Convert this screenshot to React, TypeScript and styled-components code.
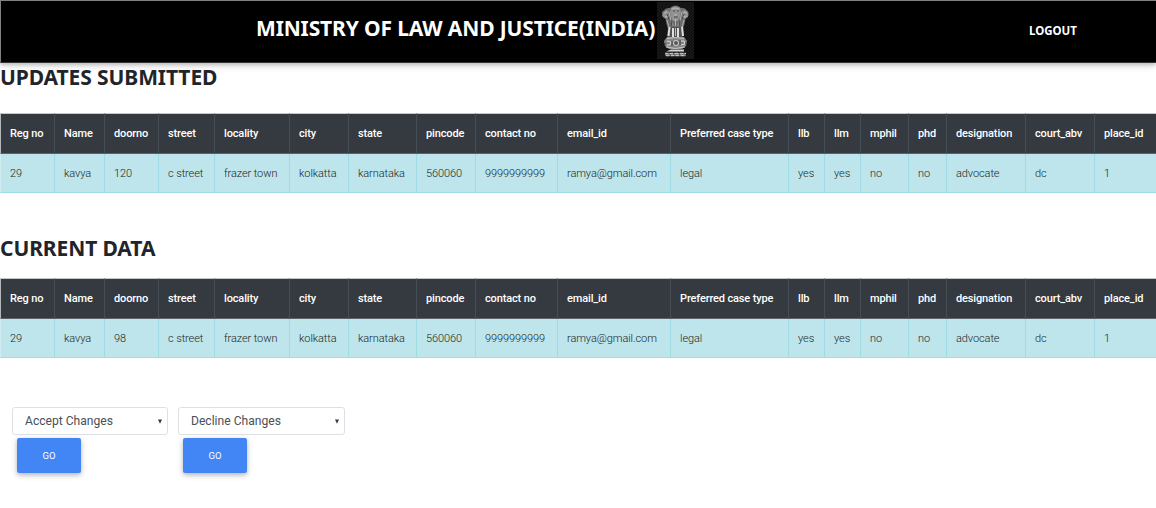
import React from "react";
import styled, { createGlobalStyle } from "styled-components";

const GlobalStyle = createGlobalStyle`
  * { box-sizing: border-box; }
  body {
    margin: 0;
    background: #fff;
    color: #212529;
    font-family: Roboto, "Liberation Sans", sans-serif;
  }
`;

const headingFont = `"Noto Sans", "Open Sans", sans-serif`;

const Navbar = styled.header`
  display: flex;
  align-items: flex-start;
  height: 63px;
  padding-left: 255px;
  background: #000;
  border-top: 1px solid #808080;
  border-left: 1px solid #808080;
  border-bottom: 1px solid #383435;
  box-shadow: 0 2px 4px rgba(0, 0, 0, 0.2), 0 2px 9px rgba(0, 0, 0, 0.12);
`;

const Brand = styled.h1`
  width: 401px;
  margin: 13px 0 0;
  color: #fff;
  font: 700 21px/28px ${headingFont};
  letter-spacing: -0.14px;
  white-space: nowrap;
`;

const Emblem = styled.svg`
  display: block;
  width: 37px;
  height: 57px;
  margin-top: 1px;
`;

const Logout = styled.a`
  margin: 21px 0 0 335px;
  color: #fff;
  font: 700 11.5px/18px ${headingFont};
  letter-spacing: -0.05px;
`;

const Heading = styled.h2<{ $height: number }>`
  height: ${(p) => p.$height}px;
  margin: 0;
  font: 700 21px/28px ${headingFont};
  letter-spacing: -0.1px;
  white-space: nowrap;
`;

const Table = styled.table`
  width: 1156px;
  table-layout: fixed;
  border-collapse: separate;
  border-spacing: 0;
  font-size: 11px;
  line-height: 16px;
  text-align: left;
  white-space: nowrap;
`;

const HeadCell = styled.th`
  height: 41px;
  padding: 1px 0 0 9px;
  background: #343a40;
  color: #fff;
  font-weight: 500;
  letter-spacing: -0.14px;
  border-top: 1px solid #c5c8ca;
  border-left: 1px solid #454d55;
  border-bottom: 1px solid #5c646b;
  &:first-child { border-left-color: #b5b8ba; }
`;

const DataCell = styled.td`
  height: 39px;
  padding: 2px 0 0 9px;
  background: #bee5eb;
  color: #212529;
  font-weight: 300;
  letter-spacing: -0.09px;
  border-left: 1px solid #9fdbe4;
  border-bottom: 1px solid #9fdbe4;
  &:first-child { border-left-color: #d2ecf0; }
`;

const Section = styled.section<{ $top: number }>`
  padding-top: ${(p) => p.$top}px;
`;

const Actions = styled.div`
  display: flex;
  gap: 10px;
  padding: 49px 0 30px 12px;
`;

const Action = styled.form`
  display: flex;
  flex-direction: column;
  align-items: flex-start;
`;

const Picker = styled.div<{ $width: number }>`
  display: flex;
  align-items: center;
  justify-content: space-between;
  width: ${(p) => p.$width}px;
  height: 28px;
  padding: 0 5px 0 12px;
  border: 1px solid #dde1e5;
  border-radius: 3px;
  color: #495057;
  font-size: 12.1px;
`;

const Arrow = styled.svg`
  width: 4px;
  height: 5px;
`;

const GoButton = styled.button`
  width: 64.5px;
  height: 35px;
  margin: 3px 0 0 4.7px;
  padding: 0;
  border: 0;
  border-radius: 2px;
  background: #4285f4;
  color: #fff;
  font: 400 9.5px Roboto, sans-serif;
  box-shadow: 0 2px 4px rgba(0, 0, 0, 0.18), 0 2px 7px rgba(0, 0, 0, 0.14);
`;

const columns: [string, number][] = [
  ["Reg no", 54], ["Name", 50], ["doorno", 54], ["street", 56], ["locality", 75],
  ["city", 59], ["state", 68], ["pincode", 59], ["contact no", 82], ["email_id", 113],
  ["Preferred case type", 118], ["llb", 36], ["llm", 36], ["mphil", 48], ["phd", 38],
  ["designation", 79], ["court_abv", 69], ["place_id", 62],
];

const record = (door: string) => [
  "29", "kavya", door, "c street", "frazer town", "kolkatta", "karnataka", "560060",
  "9999999999", "ramya@gmail.com", "legal", "yes", "yes", "no", "no", "advocate", "dc", "1",
];

function RecordTable({ values }: { values: string[] }) {
  return (
    <Table>
      <colgroup>
        {columns.map(([name, width]) => <col key={name} width={width} />)}
      </colgroup>
      <thead>
        <tr>{columns.map(([name]) => <HeadCell key={name}>{name}</HeadCell>)}</tr>
      </thead>
      <tbody>
        <tr>{values.map((value, i) => <DataCell key={i}>{value}</DataCell>)}</tr>
      </tbody>
    </Table>
  );
}

function LionEmblem() {
  return (
    <Emblem viewBox="0 0 37 57">
      <defs>
        <pattern id="hatch" width="3" height="3" patternUnits="userSpaceOnUse">
          <rect width="3" height="3" fill="#101010" />
          <path d="M0 3L3 0" stroke="#242424" strokeWidth=".7" />
        </pattern>
      </defs>
      <rect width="37" height="57" fill="url(#hatch)" />
      {/* manes and heads */}
      <path d="M13 6q2-2.500 5.500-2.500t5.500 2.500q3-.500 4.500 1l3 3v4l-3 3-1 5-1.500 5H11l-1.500-5-1-5L5 14v-4l3.500-3q1.500-1.500 4.500-1z" fill="#6c6c6c" />
      <path d="M14 6q4-3 9 0l1 4-1 5-2 4h-5l-2-4-1-5zM6 11l3-3 3 1-1 3 1 3-2 2-4-2zM31 11l-3-3-3 1 1 3-1 3 2 2 4-2z" fill="#929292" />
      <path d="M15 7q3.500-2 7 0M17 13h3M7 11l3-1M27 10l3 1M8 15l3-1M26 14l3 1M12 10l2 9 2 5M25 10l-2 9-2 5M10 18l2 7M27 18l-2 7M18.500 17v7" fill="none" stroke="#c4c4c4" strokeWidth=".8" />
      <path d="M16 9h2M20 9h2M17 15h4M10 12l2 5M27 12l-2 5M14 18l1 6M23 18l-1 6" fill="none" stroke="#333" strokeWidth=".8" />
      {/* forelegs */}
      <path d="M11 25h15l1 8-2 4H12l-2-3z" fill="#505050" />
      <path d="M12.500 25l-1 9M16 26v9M21 26v9M25 25l1 9" stroke="#dedede" strokeWidth="2" />
      <path d="M18.500 26v8" stroke="#bbb" strokeWidth="1" />
      {/* wheel and animals on the abacus */}
      <path d="M10 35h17l3 4-1 5-4 3H12l-4-3-1-5z" fill="#858585" />
      <path d="M10 36.500q8-2 17 0M9 45q9 3 19 0" fill="none" stroke="#c8c8c8" />
      <circle cx="19" cy="41" r="2.500" fill="#555" stroke="#d5d5d5" />
      <path d="M10 39l4 1-1 3h-3M24 39h3l1 3-4 1" fill="none" stroke="#ddd" />
      <path d="M8 41v2M15 39v5M23 38v5M29 40v3" fill="none" stroke="#3c3c3c" />
      {/* plinth and motto band */}
      <path d="M14 47.500h13v2H9z" fill="#d5d5d5" />
      <path d="M8 51.500h21M9 53.500h20" stroke="#c8c8c8" strokeWidth="1.600" strokeDasharray="3 .5 1 .5" />
      <path d="M9 51v3M12 51v3M15 51v3M18 51v3M21 51v3M24 51v3M27 51v3" stroke="#aaa" />
    </Emblem>
  );
}

function ActionForm({ label, width }: { label: string; width: number }) {
  return (
    <Action onSubmit={(e) => e.preventDefault()}>
      <Picker $width={width}>
        {label}
        <Arrow viewBox="0 0 4 5"><path d="M0 .5h4L2 4.800z" fill="#343a40" /></Arrow>
      </Picker>
      <GoButton>GO</GoButton>
    </Action>
  );
}

export default function App() {
  return (
    <>
      <GlobalStyle />
      <Navbar>
        <Brand>MINISTRY OF LAW AND JUSTICE(INDIA)</Brand>
        <LionEmblem />
        <Logout>LOGOUT</Logout>
      </Navbar>
      <Section $top={0}>
        <Heading $height={50}>UPDATES SUBMITTED</Heading>
        <RecordTable values={record("120")} />
      </Section>
      <Section $top={41}>
        <Heading $height={44}>CURRENT DATA</Heading>
        <RecordTable values={record("98")} />
      </Section>
      <Actions>
        <ActionForm label="Accept Changes" width={156} />
        <ActionForm label="Decline Changes" width={167} />
      </Actions>
    </>
  );
}
